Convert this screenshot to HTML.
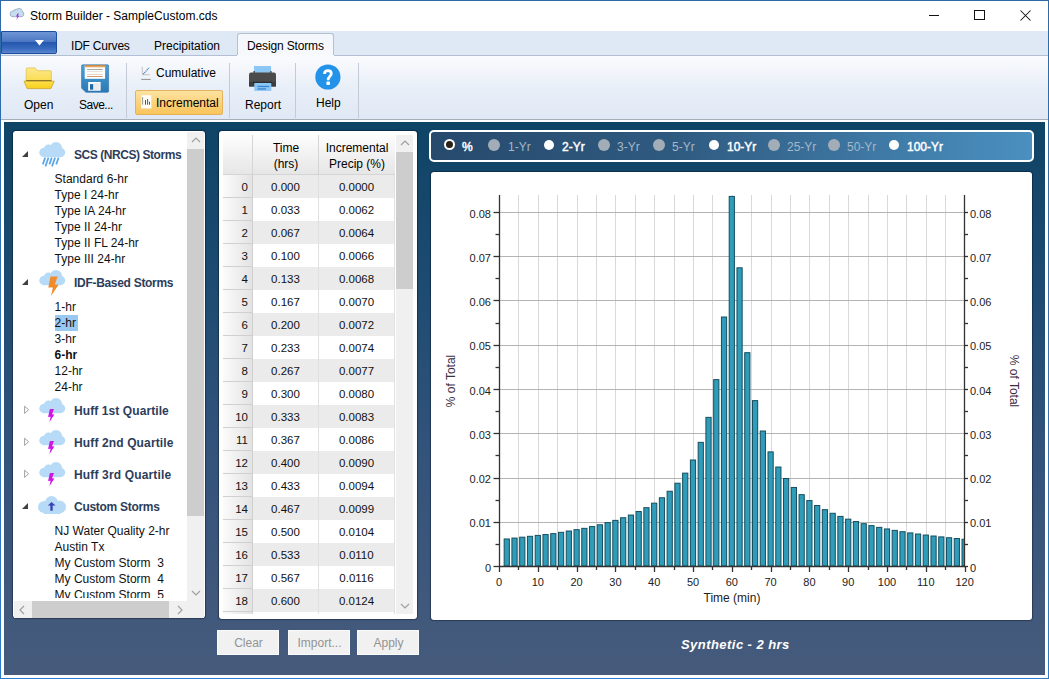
<!DOCTYPE html>
<html><head><meta charset="utf-8">
<style>
*{margin:0;padding:0;box-sizing:border-box}
html,body{width:1049px;height:679px;overflow:hidden;background:#fff;font-family:"Liberation Sans",sans-serif;font-size:12px;color:#000}
.a{position:absolute}
.t{position:absolute;white-space:nowrap;line-height:1}
#win{position:absolute;left:0;top:0;width:1049px;height:679px;border:1px solid transparent;border-image:linear-gradient(#2e6aa5,#2f72b4 50%,#2a7bcb) 1;}
#tabs{position:absolute;left:1px;top:31px;width:1047px;height:25px;background:#dfe8f5;border-bottom:1px solid #b3bfd3}
#ribbon{position:absolute;left:1px;top:56px;width:1047px;height:64px;background:linear-gradient(#fafbfd,#e9eff8 50%,#dfe8f5);border-bottom:1px solid #a9adb5}
#main{position:absolute;left:4px;top:122px;width:1041px;height:553px;background:linear-gradient(#0e4466 0%,#1e4b71 30%,#33537b 60%,#465b7c 100%)}
.panel{position:absolute;background:#fff;border-radius:3px;box-shadow:0 0 1px 1px rgba(0,0,20,.35)}
.sep{position:absolute;top:63px;width:1px;height:55px;background:#c5cbd6}
.rh{position:absolute;left:223px;width:30px;height:23px;background:linear-gradient(90deg,#fbfbfb,#e3e3e3);border-bottom:1px solid #d0d0d0;border-right:1px solid #cfcfcf;text-align:right;padding-right:4px;padding-top:1px;line-height:23px;font-size:11.5px;color:#111}
.rc{position:absolute;height:23px;text-align:center;padding-top:1px;line-height:23px;font-size:11.5px;color:#111;border-right:1px solid #e0e0e0}
.tree{position:absolute;white-space:nowrap;font-size:12px;line-height:16px;color:#111}
.th{position:absolute;white-space:nowrap;font-size:12px;font-weight:bold;color:#2d3d5a}
.btn{position:absolute;top:630px;height:25px;background:#f1f1f1;border:1px solid #fbfbfb;color:#939393;font-size:12px;text-align:center;line-height:25px;padding-left:1px}
.rl{position:absolute;top:139px;font-size:12px;font-weight:bold;white-space:nowrap;line-height:14px}
.rd{position:absolute;width:12px;height:12px;border-radius:50%;top:139px}
</style></head><body>
<div id="win"></div>
<!-- title bar -->
<svg class="a" style="left:9px;top:7px" width="16" height="14" viewBox="0 0 16 14">
 <g fill="#c6dcf0" stroke="#95a7bc" stroke-width="0.9"><circle cx="4" cy="6.8" r="2.9"/><circle cx="7.3" cy="5" r="2.8"/><circle cx="10.2" cy="4.6" r="3.1"/><circle cx="12.1" cy="7" r="2.7"/><rect x="4" y="6" width="8" height="3.7"/></g>
 <g fill="#c6dcf0"><circle cx="4" cy="6.8" r="2.45"/><circle cx="7.3" cy="5" r="2.35"/><circle cx="10.2" cy="4.6" r="2.65"/><circle cx="12.1" cy="7" r="2.25"/><rect x="4" y="5.5" width="8" height="3.75"/></g>
 <path d="M8.6 6.6 L7 9.6 L8.5 9.6 L7.2 13 L10.2 8.8 L8.8 8.8 L9.9 6.6Z" fill="#a326d8"/>
</svg>
<div class="t" style="left:30px;top:10px;font-size:12px">Storm Builder - SampleCustom.cds</div>
<div class="a" style="left:929px;top:15px;width:10px;height:1px;background:#111"></div>
<div class="a" style="left:974px;top:10px;width:11px;height:10px;border:1px solid #111"></div>
<svg class="a" style="left:1019.5px;top:10px" width="11" height="11"><path d="M0.5 0.5 L10.5 10.5 M10.5 0.5 L0.5 10.5" stroke="#111" stroke-width="1.05"/></svg>

<!-- tabs -->
<div id="tabs"></div>
<div class="a" style="left:1px;top:31px;width:56px;height:23px;border:1px solid #1d4f9c;border-radius:0 2px 2px 0;background:linear-gradient(#6e95d4,#4d78c4 45%,#2457ae 50%,#3a6cc0 80%,#5b86cf)"></div>
<svg class="a" style="left:35px;top:40px" width="10" height="6"><path d="M0 0 L9 0 L4.5 5.5Z" fill="#fff"/></svg>
<div class="t" style="left:71px;top:40px;letter-spacing:-0.2px">IDF Curves</div>
<div class="t" style="left:154px;top:40px">Precipitation</div>
<div class="a" style="left:237px;top:33px;width:97px;height:24px;background:linear-gradient(#f3f6fb,#f7f9fc);border:1px solid #b7c0cf;border-bottom:none;border-radius:3px 3px 0 0"></div>
<div class="t" style="left:247px;top:40px;letter-spacing:-0.15px">Design Storms</div>

<!-- ribbon -->
<div id="ribbon"></div>
<div class="a" style="left:237px;top:55px;width:97px;height:2px;background:#f8fafd"></div>
<!-- open folder -->
<svg class="a" style="left:23px;top:66px" width="33" height="24" viewBox="0 0 33 24">
 <defs><linearGradient id="fb" x1="0" y1="0" x2="0" y2="1"><stop offset="0" stop-color="#fde88a"/><stop offset="1" stop-color="#f9dc50"/></linearGradient>
 <linearGradient id="ff" x1="0" y1="0" x2="0" y2="1"><stop offset="0" stop-color="#fde04a"/><stop offset="1" stop-color="#f9cf1e"/></linearGradient></defs>
 <path d="M3.2 3.2 Q3.2 1.9 4.5 1.9 L12.3 1.9 L14.2 4.7 L27.3 4.7 Q28.4 4.7 28.4 5.8 L28.4 15 L3.2 15Z" fill="url(#fb)" stroke="#e0bd45" stroke-width="0.7"/>
 <rect x="3.2" y="14" width="25.2" height="1.5" fill="#7d6a2a"/>
 <path d="M1 15.2 L31.2 15.2 L27.9 22.6 L4.2 22.6 Z" fill="url(#ff)" stroke="#c9a227" stroke-width="0.8" stroke-linejoin="round"/>
</svg>
<div class="t" style="left:24px;top:99px">Open</div>
<!-- save floppy -->
<svg class="a" style="left:80px;top:64px" width="30" height="30" viewBox="0 0 30 30">
 <defs><linearGradient id="sb" x1="0" y1="0" x2="0" y2="1"><stop offset="0" stop-color="#4aa2d9"/><stop offset="1" stop-color="#2c78b4"/></linearGradient>
 <linearGradient id="so" x1="0" y1="0" x2="0" y2="1"><stop offset="0" stop-color="#c4782e"/><stop offset="1" stop-color="#f2c48a"/></linearGradient></defs>
 <path d="M1.6 1.8 Q1.6 0.8 2.6 0.8 L27.6 0.8 Q28.6 0.8 28.6 1.8 L28.6 27.3 Q28.6 28.3 27.6 28.3 L6 28.3 L1.6 24.3 Z" fill="url(#sb)" stroke="#2a6fa6" stroke-width="0.6"/>
 <rect x="4.7" y="1" width="20.4" height="13.8" fill="#fff"/>
 <rect x="4.7" y="1" width="20.4" height="2.5" fill="url(#so)"/>
 <rect x="7.1" y="5.1" width="15.7" height="0.9" fill="#a0a0a0"/>
 <rect x="7.1" y="7.1" width="15.7" height="0.8" fill="#dcdcdc"/>
 <rect x="7.1" y="9.9" width="15.7" height="0.8" fill="#e2c4ae"/>
 <rect x="7.1" y="12" width="15.7" height="0.9" fill="#c9906a"/>
 <rect x="8.2" y="18" width="12.4" height="8.7" fill="#fff"/>
 <rect x="13.5" y="19" width="6.2" height="7" fill="#ebebeb"/>
 <rect x="10" y="20.1" width="3.2" height="5.6" fill="#1f6aa8"/>
</svg>
<div class="t" style="left:79px;top:99px;letter-spacing:-0.5px">Save...</div>
<div class="sep" style="left:126px"></div>
<!-- cumulative -->
<svg class="a" style="left:140px;top:66px" width="12" height="15" viewBox="0 0 12 15">
 <path d="M2.3 0.9 L2.3 8.7 L9.8 8.7" stroke="#b8b8b8" stroke-width="0.8" fill="none"/>
 <path d="M3.3 8.2 L8.6 2.2" stroke="#2d6f9e" stroke-width="1.1" stroke-dasharray="1.1 0.7" fill="none"/>
 <path d="M8.6 2.2 L10 1.4" stroke="#9fd0ee" stroke-width="0.8" fill="none"/>
 <rect x="1.2" y="12.9" width="9.5" height="1.1" fill="#9a9a9a"/>
</svg>
<div class="t" style="left:156px;top:67px">Cumulative</div>
<div class="a" style="left:135px;top:90px;width:88px;height:25px;border:1px solid #e3b25b;border-radius:2px;background:linear-gradient(#fde3a0,#fbd27d 50%,#f9c45c)"></div>
<svg class="a" style="left:141px;top:94px" width="12" height="16" viewBox="0 0 12 16">
 <rect x="0" y="1" width="10.3" height="13.5" fill="#fffdf6" stroke="#f3e2bb" stroke-width="0.6"/>
 <rect x="1.2" y="3" width="0.9" height="7.7" fill="#8a8a8a"/>
 <rect x="4" y="6" width="1" height="4.7" fill="#2b6088"/><rect x="6.1" y="5" width="1" height="5.7" fill="#2b6088"/><rect x="8" y="7.7" width="1" height="3" fill="#2b6088"/>
</svg>
<div class="t" style="left:156px;top:97px">Incremental</div>
<div class="sep" style="left:229px"></div>
<!-- report printer -->
<svg class="a" style="left:248px;top:65px" width="29" height="27" viewBox="0 0 29 27">
 <rect x="6" y="1" width="17" height="7" fill="#8cc6f4"/>
 <rect x="5.5" y="6" width="1.2" height="2" fill="#333"/><rect x="22.3" y="6" width="1.2" height="2" fill="#333"/>
 <path d="M3 7.5 L26 7.5 Q28 7.5 28 9.5 L28 20.5 Q28 21.5 27 21.5 L2 21.5 Q1 21.5 1 20.5 L1 9.5 Q1 7.5 3 7.5Z" fill="#4b4b4b"/>
 <rect x="1" y="17" width="27" height="4.5" fill="#3d3d3d"/>
 <rect x="5" y="16.8" width="19" height="1.4" fill="#1e1e1e"/>
 <rect x="6.3" y="17.9" width="17" height="8" fill="#8cc6f4"/>
 <rect x="9.5" y="20.8" width="11.5" height="1.3" fill="#3a84d0"/>
 <rect x="9.5" y="23.3" width="8.5" height="1.3" fill="#3a84d0"/>
</svg>
<div class="t" style="left:245px;top:99px">Report</div>
<div class="sep" style="left:295px"></div>
<!-- help -->
<svg class="a" style="left:315px;top:64px" width="26" height="26" viewBox="0 0 26 26">
 <circle cx="12.9" cy="13" r="12.6" fill="#2393ea"/>
 <path d="M9.5 10 C9.5 7.3 11.2 6.7 13 6.7 C15.2 6.7 16.3 8 16.3 9.6 C16.3 12.3 13.2 12.6 13.2 15.6 L13.2 16.2" stroke="#fff" stroke-width="2.7" fill="none"/>
 <rect x="11.4" y="17.6" width="3.6" height="3.3" rx="1" fill="#fff"/>
</svg>
<div class="t" style="left:316px;top:97px">Help</div>
<div class="sep" style="left:358px"></div>

<!-- main -->
<div id="main"></div>

<!-- tree panel -->
<div class="panel" style="left:13px;top:131px;width:192px;height:487px;overflow:hidden">
</div>
<div class="a" style="left:187px;top:132px;width:17px;height:469px;background:#f0f0f0"></div>
<div class="a" style="left:187px;top:149px;width:17px;height:367px;background:#cdcdcd"></div>
<svg class="a" style="left:191px;top:137px" width="10" height="6"><path d="M1 5 L5 1 L9 5" stroke="#a0a0a0" stroke-width="1.2" fill="none"/></svg>
<svg class="a" style="left:191px;top:590px" width="10" height="6"><path d="M1 1 L5 5 L9 1" stroke="#a0a0a0" stroke-width="1.2" fill="none"/></svg>
<div class="a" style="left:14px;top:601px;width:190px;height:17px;background:#f0f0f0"></div>
<div class="a" style="left:32px;top:601px;width:137px;height:17px;background:#cdcdcd"></div>
<svg class="a" style="left:19px;top:605px" width="6" height="10"><path d="M5 1 L1 5 L5 9" stroke="#a0a0a0" stroke-width="1.2" fill="none"/></svg>
<svg class="a" style="left:177px;top:605px" width="6" height="10"><path d="M1 1 L5 5 L1 9" stroke="#a0a0a0" stroke-width="1.2" fill="none"/></svg>

<div class="a" style="left:13px;top:131px;width:174px;height:467px;overflow:hidden"><div style="position:absolute;left:-13px;top:-131px;width:1049px;height:679px"><svg class="a" style="left:21px;top:150px" width="8" height="8"><path d="M7 1 L7 7 L1 7Z" fill="#404040"/></svg>
<svg class="a" style="left:36px;top:138px" width="34" height="32" viewBox="0 0 34 32"><circle cx="8" cy="14.5" r="4.7" fill="#b7daf6"/><circle cx="12.5" cy="11" r="4.6" fill="#b7daf6"/><circle cx="20" cy="10" r="6" fill="#b7daf6"/><circle cx="24.5" cy="14.5" r="4.7" fill="#b7daf6"/><rect x="8" y="11" width="16.5" height="8.2" fill="#b7daf6"/><path d="M9.2 19.6 L6.8 26.4 M12.5 19.6 L9.4 28.4 M15.8 19.6 L13.4 26.4 M19.1 19.6 L16 28.4 M22.6 19.6 L20.2 26.4" stroke="#5ba6e8" stroke-width="1.7" stroke-linecap="butt"/></svg>
<div class="th" style="left:74px;top:148px;letter-spacing:-0.44px">SCS (NRCS) Storms</div>
<div class="tree" style="left:54.6px;top:171px;">Standard 6-hr</div>
<div class="tree" style="left:54.6px;top:187px;">Type I 24-hr</div>
<div class="tree" style="left:54.6px;top:203px;">Type IA 24-hr</div>
<div class="tree" style="left:54.6px;top:219px;">Type II 24-hr</div>
<div class="tree" style="left:54.6px;top:235px;">Type II FL 24-hr</div>
<div class="tree" style="left:54.6px;top:251px;">Type III 24-hr</div>
<svg class="a" style="left:21px;top:278px" width="8" height="8"><path d="M7 1 L7 7 L1 7Z" fill="#404040"/></svg>
<svg class="a" style="left:36px;top:266px" width="34" height="32" viewBox="0 0 34 32"><circle cx="8" cy="14.5" r="4.7" fill="#b7daf6"/><circle cx="12.5" cy="11" r="4.6" fill="#b7daf6"/><circle cx="20" cy="10" r="6" fill="#b7daf6"/><circle cx="24.5" cy="14.5" r="4.7" fill="#b7daf6"/><rect x="8" y="11" width="16.5" height="8.2" fill="#b7daf6"/><path d="M14.5 10.6 L21.6 10.6 L18.8 18.6 L22.6 18.8 L15 30 L16.9 21.6 L12.3 21.6 Z" fill="#f08c2c"/></svg>
<div class="th" style="left:74px;top:276px;letter-spacing:-0.3px">IDF-Based Storms</div>
<div class="tree" style="left:54.6px;top:299px;">1-hr</div>
<div class="tree" style="left:54.6px;top:315px;background:#99c9f1;padding-right:2px">2-hr</div>
<div class="tree" style="left:54.6px;top:331px;">3-hr</div>
<div class="tree" style="left:54.6px;top:347px;font-weight:bold">6-hr</div>
<div class="tree" style="left:54.6px;top:363px;">12-hr</div>
<div class="tree" style="left:54.6px;top:379px;">24-hr</div>
<svg class="a" style="left:24px;top:405px" width="6" height="10"><path d="M0.6 1.2 L4.6 4.8 L0.6 8.4Z" fill="#fff" stroke="#a0a0a0" stroke-width="1"/></svg>
<svg class="a" style="left:36px;top:394px" width="34" height="32" viewBox="0 0 34 32"><circle cx="8" cy="14.5" r="4.7" fill="#b7daf6"/><circle cx="12.5" cy="11" r="4.6" fill="#b7daf6"/><circle cx="20" cy="10" r="6" fill="#b7daf6"/><circle cx="24.5" cy="14.5" r="4.7" fill="#b7daf6"/><rect x="8" y="11" width="16.5" height="8.2" fill="#b7daf6"/><path d="M13.9 15 L17.9 15 L16.1 20.2 L18.3 20.6 L13.4 28.2 L14.6 22.7 L12.1 22.9 Z" fill="#cf16e6"/></svg>
<div class="th" style="left:74px;top:404px;letter-spacing:0.09px">Huff 1st Quartile</div>
<svg class="a" style="left:24px;top:437px" width="6" height="10"><path d="M0.6 1.2 L4.6 4.8 L0.6 8.4Z" fill="#fff" stroke="#a0a0a0" stroke-width="1"/></svg>
<svg class="a" style="left:36px;top:426px" width="34" height="32" viewBox="0 0 34 32"><circle cx="8" cy="14.5" r="4.7" fill="#b7daf6"/><circle cx="12.5" cy="11" r="4.6" fill="#b7daf6"/><circle cx="20" cy="10" r="6" fill="#b7daf6"/><circle cx="24.5" cy="14.5" r="4.7" fill="#b7daf6"/><rect x="8" y="11" width="16.5" height="8.2" fill="#b7daf6"/><path d="M13.9 15 L17.9 15 L16.1 20.2 L18.3 20.6 L13.4 28.2 L14.6 22.7 L12.1 22.9 Z" fill="#cf16e6"/></svg>
<div class="th" style="left:74px;top:436px;letter-spacing:0.13px">Huff 2nd Quartile</div>
<svg class="a" style="left:24px;top:469px" width="6" height="10"><path d="M0.6 1.2 L4.6 4.8 L0.6 8.4Z" fill="#fff" stroke="#a0a0a0" stroke-width="1"/></svg>
<svg class="a" style="left:36px;top:458px" width="34" height="32" viewBox="0 0 34 32"><circle cx="8" cy="14.5" r="4.7" fill="#b7daf6"/><circle cx="12.5" cy="11" r="4.6" fill="#b7daf6"/><circle cx="20" cy="10" r="6" fill="#b7daf6"/><circle cx="24.5" cy="14.5" r="4.7" fill="#b7daf6"/><rect x="8" y="11" width="16.5" height="8.2" fill="#b7daf6"/><path d="M13.9 15 L17.9 15 L16.1 20.2 L18.3 20.6 L13.4 28.2 L14.6 22.7 L12.1 22.9 Z" fill="#cf16e6"/></svg>
<div class="th" style="left:74px;top:468px;letter-spacing:0.15px">Huff 3rd Quartile</div>
<svg class="a" style="left:21px;top:502px" width="8" height="8"><path d="M7 1 L7 7 L1 7Z" fill="#404040"/></svg>
<svg class="a" style="left:36px;top:490px" width="34" height="32" viewBox="0 0 34 32"><circle cx="8" cy="17" r="6" fill="#b7daf6"/><circle cx="15.5" cy="12.5" r="6.5" fill="#b7daf6"/><circle cx="23.5" cy="17" r="6.5" fill="#b7daf6"/><rect x="8" y="15" width="16" height="9" fill="#b7daf6"/><path d="M15.5 12 L11.8 15.6 L14.3 15.6 L14.3 20.8 L16.7 20.8 L16.7 15.6 L19.6 15.6 Z" fill="#3b45b8"/></svg>
<div class="th" style="left:74px;top:500px;letter-spacing:-0.29px">Custom Storms</div>
<div class="tree" style="left:54.6px;top:523px;">NJ Water Quality 2-hr</div>
<div class="tree" style="left:54.6px;top:539px;">Austin Tx</div>
<div class="tree" style="left:54.6px;top:555px;">My Custom Storm&nbsp; 3</div>
<div class="tree" style="left:54.6px;top:571px;">My Custom Storm&nbsp; 4</div>
<div class="tree" style="left:54.6px;top:587px;">My Custom Storm&nbsp; 5</div></div></div>

<!-- table panel -->
<div class="panel" style="left:219px;top:131px;width:198px;height:488px"></div>
<div class="a" style="left:223px;top:135px;width:172px;height:40px;background:linear-gradient(#fdfdfd,#e6e6e6);border-bottom:1px solid #d5d5d5"></div>
<div class="a" style="left:252px;top:135px;width:1px;height:39px;background:#d5d5d5"></div>
<div class="a" style="left:318px;top:135px;width:1px;height:39px;background:#d5d5d5"></div>
<div class="t" style="left:253px;width:66px;text-align:center;top:140px;line-height:16px;white-space:normal">Time<br>(hrs)</div>
<div class="t" style="left:319px;width:76px;text-align:center;top:140px;line-height:16px;white-space:normal">Incremental<br>Precip (%)</div>
<div class="a" style="left:219px;top:175px;width:198px;height:439px;overflow:hidden">
<div style="position:absolute;left:-219px;top:-175px;width:1049px;height:679px">
<div class="rh" style="top:175px">0</div><div class="rc" style="top:175px;left:253px;width:66px;background:#ebebeb">0.000</div><div class="rc" style="top:175px;left:319px;width:76px;background:#ebebeb">0.0000</div>
<div class="rh" style="top:198px">1</div><div class="rc" style="top:198px;left:253px;width:66px;background:#ffffff">0.033</div><div class="rc" style="top:198px;left:319px;width:76px;background:#ffffff">0.0062</div>
<div class="rh" style="top:221px">2</div><div class="rc" style="top:221px;left:253px;width:66px;background:#ebebeb">0.067</div><div class="rc" style="top:221px;left:319px;width:76px;background:#ebebeb">0.0064</div>
<div class="rh" style="top:244px">3</div><div class="rc" style="top:244px;left:253px;width:66px;background:#ffffff">0.100</div><div class="rc" style="top:244px;left:319px;width:76px;background:#ffffff">0.0066</div>
<div class="rh" style="top:267px">4</div><div class="rc" style="top:267px;left:253px;width:66px;background:#ebebeb">0.133</div><div class="rc" style="top:267px;left:319px;width:76px;background:#ebebeb">0.0068</div>
<div class="rh" style="top:290px">5</div><div class="rc" style="top:290px;left:253px;width:66px;background:#ffffff">0.167</div><div class="rc" style="top:290px;left:319px;width:76px;background:#ffffff">0.0070</div>
<div class="rh" style="top:313px">6</div><div class="rc" style="top:313px;left:253px;width:66px;background:#ebebeb">0.200</div><div class="rc" style="top:313px;left:319px;width:76px;background:#ebebeb">0.0072</div>
<div class="rh" style="top:336px">7</div><div class="rc" style="top:336px;left:253px;width:66px;background:#ffffff">0.233</div><div class="rc" style="top:336px;left:319px;width:76px;background:#ffffff">0.0074</div>
<div class="rh" style="top:359px">8</div><div class="rc" style="top:359px;left:253px;width:66px;background:#ebebeb">0.267</div><div class="rc" style="top:359px;left:319px;width:76px;background:#ebebeb">0.0077</div>
<div class="rh" style="top:382px">9</div><div class="rc" style="top:382px;left:253px;width:66px;background:#ffffff">0.300</div><div class="rc" style="top:382px;left:319px;width:76px;background:#ffffff">0.0080</div>
<div class="rh" style="top:405px">10</div><div class="rc" style="top:405px;left:253px;width:66px;background:#ebebeb">0.333</div><div class="rc" style="top:405px;left:319px;width:76px;background:#ebebeb">0.0083</div>
<div class="rh" style="top:428px">11</div><div class="rc" style="top:428px;left:253px;width:66px;background:#ffffff">0.367</div><div class="rc" style="top:428px;left:319px;width:76px;background:#ffffff">0.0086</div>
<div class="rh" style="top:451px">12</div><div class="rc" style="top:451px;left:253px;width:66px;background:#ebebeb">0.400</div><div class="rc" style="top:451px;left:319px;width:76px;background:#ebebeb">0.0090</div>
<div class="rh" style="top:474px">13</div><div class="rc" style="top:474px;left:253px;width:66px;background:#ffffff">0.433</div><div class="rc" style="top:474px;left:319px;width:76px;background:#ffffff">0.0094</div>
<div class="rh" style="top:497px">14</div><div class="rc" style="top:497px;left:253px;width:66px;background:#ebebeb">0.467</div><div class="rc" style="top:497px;left:319px;width:76px;background:#ebebeb">0.0099</div>
<div class="rh" style="top:520px">15</div><div class="rc" style="top:520px;left:253px;width:66px;background:#ffffff">0.500</div><div class="rc" style="top:520px;left:319px;width:76px;background:#ffffff">0.0104</div>
<div class="rh" style="top:543px">16</div><div class="rc" style="top:543px;left:253px;width:66px;background:#ebebeb">0.533</div><div class="rc" style="top:543px;left:319px;width:76px;background:#ebebeb">0.0110</div>
<div class="rh" style="top:566px">17</div><div class="rc" style="top:566px;left:253px;width:66px;background:#ffffff">0.567</div><div class="rc" style="top:566px;left:319px;width:76px;background:#ffffff">0.0116</div>
<div class="rh" style="top:589px">18</div><div class="rc" style="top:589px;left:253px;width:66px;background:#ebebeb">0.600</div><div class="rc" style="top:589px;left:319px;width:76px;background:#ebebeb">0.0124</div>
<div class="rh" style="top:612px">19</div><div class="rc" style="top:612px;left:253px;width:66px;background:#ffffff">0.633</div><div class="rc" style="top:612px;left:319px;width:76px;background:#ffffff">0.0132</div>
</div></div>
<div class="a" style="left:396px;top:135px;width:17px;height:479px;background:#f0f0f0"></div>
<div class="a" style="left:396px;top:152px;width:17px;height:137px;background:#cdcdcd"></div>
<svg class="a" style="left:400px;top:140px" width="10" height="6"><path d="M1 5 L5 1 L9 5" stroke="#a0a0a0" stroke-width="1.2" fill="none"/></svg>
<svg class="a" style="left:400px;top:603px" width="10" height="6"><path d="M1 1 L5 5 L9 1" stroke="#a0a0a0" stroke-width="1.2" fill="none"/></svg>

<div class="btn" style="left:217px;width:62px">Clear</div>
<div class="btn" style="left:288px;width:62px">Import...</div>
<div class="btn" style="left:357px;width:62px">Apply</div>

<!-- radio bar -->
<div class="a" style="left:429px;top:130px;width:605px;height:32px;border:2px solid #fff;border-radius:5px;background:linear-gradient(90deg,#274a6d,#2f5a80 40%,#4a90c0)"></div>
<div class="rd" style="left:443.5px;top:139.4px;width:11px;height:11px;background:#2a2118;border:2.2px solid #fff"></div>
<div class="rl" style="left:462px;color:#fff;font-weight:normal;-webkit-text-stroke:0.45px #fff;top:140px">%</div>
<div class="rd" style="left:488px;top:139.2px;width:12px;height:12px;background:#a2adb8"></div>
<div class="rl" style="left:508px;color:#a6b8c8;font-weight:normal;top:140px">1-Yr</div>
<div class="rd" style="left:544px;top:140px;width:10px;height:10px;background:#fff"></div>
<div class="rl" style="left:562px;color:#fff;font-weight:normal;-webkit-text-stroke:0.45px #fff;top:140px">2-Yr</div>
<div class="rd" style="left:598px;top:139.2px;width:12px;height:12px;background:#a2adb8"></div>
<div class="rl" style="left:617px;color:#a6b8c8;font-weight:normal;top:140px">3-Yr</div>
<div class="rd" style="left:653px;top:139.2px;width:12px;height:12px;background:#a2adb8"></div>
<div class="rl" style="left:672px;color:#a6b8c8;font-weight:normal;top:140px">5-Yr</div>
<div class="rd" style="left:709px;top:140px;width:10px;height:10px;background:#fff"></div>
<div class="rl" style="left:727px;color:#fff;font-weight:normal;-webkit-text-stroke:0.45px #fff;top:140px">10-Yr</div>
<div class="rd" style="left:768px;top:139.2px;width:12px;height:12px;background:#a2adb8"></div>
<div class="rl" style="left:787px;color:#a6b8c8;font-weight:normal;top:140px">25-Yr</div>
<div class="rd" style="left:828px;top:139.2px;width:12px;height:12px;background:#a2adb8"></div>
<div class="rl" style="left:847px;color:#a6b8c8;font-weight:normal;top:140px">50-Yr</div>
<div class="rd" style="left:889px;top:140px;width:10px;height:10px;background:#fff"></div>
<div class="rl" style="left:907px;color:#fff;font-weight:normal;-webkit-text-stroke:0.45px #fff;top:140px">100-Yr</div>

<!-- chart panel -->
<div class="panel" style="left:431px;top:172px;width:601px;height:448px"></div>
<svg width="1049" height="679" style="position:absolute;left:0;top:0">
<defs><clipPath id="pc"><rect x="499" y="195" width="466" height="372"/></clipPath></defs>
<line x1="518.5" y1="195" x2="518.5" y2="566" stroke="#d9d9d9" stroke-width="1"/>
<line x1="538.5" y1="195" x2="538.5" y2="566" stroke="#d9d9d9" stroke-width="1"/>
<line x1="557.5" y1="195" x2="557.5" y2="566" stroke="#d9d9d9" stroke-width="1"/>
<line x1="577.5" y1="195" x2="577.5" y2="566" stroke="#d9d9d9" stroke-width="1"/>
<line x1="596.5" y1="195" x2="596.5" y2="566" stroke="#d9d9d9" stroke-width="1"/>
<line x1="615.5" y1="195" x2="615.5" y2="566" stroke="#d9d9d9" stroke-width="1"/>
<line x1="635.5" y1="195" x2="635.5" y2="566" stroke="#d9d9d9" stroke-width="1"/>
<line x1="654.5" y1="195" x2="654.5" y2="566" stroke="#d9d9d9" stroke-width="1"/>
<line x1="674.5" y1="195" x2="674.5" y2="566" stroke="#d9d9d9" stroke-width="1"/>
<line x1="693.5" y1="195" x2="693.5" y2="566" stroke="#d9d9d9" stroke-width="1"/>
<line x1="712.5" y1="195" x2="712.5" y2="566" stroke="#d9d9d9" stroke-width="1"/>
<line x1="732.5" y1="195" x2="732.5" y2="566" stroke="#d9d9d9" stroke-width="1"/>
<line x1="751.5" y1="195" x2="751.5" y2="566" stroke="#d9d9d9" stroke-width="1"/>
<line x1="771.5" y1="195" x2="771.5" y2="566" stroke="#d9d9d9" stroke-width="1"/>
<line x1="790.5" y1="195" x2="790.5" y2="566" stroke="#d9d9d9" stroke-width="1"/>
<line x1="809.5" y1="195" x2="809.5" y2="566" stroke="#d9d9d9" stroke-width="1"/>
<line x1="829.5" y1="195" x2="829.5" y2="566" stroke="#d9d9d9" stroke-width="1"/>
<line x1="848.5" y1="195" x2="848.5" y2="566" stroke="#d9d9d9" stroke-width="1"/>
<line x1="868.5" y1="195" x2="868.5" y2="566" stroke="#d9d9d9" stroke-width="1"/>
<line x1="887.5" y1="195" x2="887.5" y2="566" stroke="#d9d9d9" stroke-width="1"/>
<line x1="906.5" y1="195" x2="906.5" y2="566" stroke="#d9d9d9" stroke-width="1"/>
<line x1="926.5" y1="195" x2="926.5" y2="566" stroke="#d9d9d9" stroke-width="1"/>
<line x1="945.5" y1="195" x2="945.5" y2="566" stroke="#d9d9d9" stroke-width="1"/>
<line x1="499" y1="522.5" x2="965" y2="522.5" stroke="#b4b4b4" stroke-width="1"/>
<line x1="499" y1="478.5" x2="965" y2="478.5" stroke="#b4b4b4" stroke-width="1"/>
<line x1="499" y1="433.5" x2="965" y2="433.5" stroke="#b4b4b4" stroke-width="1"/>
<line x1="499" y1="389.5" x2="965" y2="389.5" stroke="#b4b4b4" stroke-width="1"/>
<line x1="499" y1="345.5" x2="965" y2="345.5" stroke="#b4b4b4" stroke-width="1"/>
<line x1="499" y1="300.5" x2="965" y2="300.5" stroke="#b4b4b4" stroke-width="1"/>
<line x1="499" y1="256.5" x2="965" y2="256.5" stroke="#b4b4b4" stroke-width="1"/>
<line x1="499" y1="212.5" x2="965" y2="212.5" stroke="#b4b4b4" stroke-width="1"/>
<g clip-path="url(#pc)"><rect x="504.16" y="538.97" width="5.2" height="27.03" fill="#2f9db9" stroke="#164e5e" stroke-width="1"/><rect x="511.92" y="538.08" width="5.2" height="27.92" fill="#2f9db9" stroke="#164e5e" stroke-width="1"/><rect x="519.68" y="537.19" width="5.2" height="28.81" fill="#2f9db9" stroke="#164e5e" stroke-width="1"/><rect x="527.44" y="536.31" width="5.2" height="29.69" fill="#2f9db9" stroke="#164e5e" stroke-width="1"/><rect x="535.20" y="535.42" width="5.2" height="30.58" fill="#2f9db9" stroke="#164e5e" stroke-width="1"/><rect x="542.96" y="534.54" width="5.2" height="31.46" fill="#2f9db9" stroke="#164e5e" stroke-width="1"/><rect x="550.72" y="533.65" width="5.2" height="32.35" fill="#2f9db9" stroke="#164e5e" stroke-width="1"/><rect x="558.48" y="532.33" width="5.2" height="33.67" fill="#2f9db9" stroke="#164e5e" stroke-width="1"/><rect x="566.24" y="531.00" width="5.2" height="35.00" fill="#2f9db9" stroke="#164e5e" stroke-width="1"/><rect x="574.00" y="529.67" width="5.2" height="36.33" fill="#2f9db9" stroke="#164e5e" stroke-width="1"/><rect x="581.76" y="528.35" width="5.2" height="37.65" fill="#2f9db9" stroke="#164e5e" stroke-width="1"/><rect x="589.52" y="526.57" width="5.2" height="39.43" fill="#2f9db9" stroke="#164e5e" stroke-width="1"/><rect x="597.28" y="524.80" width="5.2" height="41.20" fill="#2f9db9" stroke="#164e5e" stroke-width="1"/><rect x="605.04" y="522.59" width="5.2" height="43.41" fill="#2f9db9" stroke="#164e5e" stroke-width="1"/><rect x="612.80" y="520.38" width="5.2" height="45.62" fill="#2f9db9" stroke="#164e5e" stroke-width="1"/><rect x="620.56" y="517.73" width="5.2" height="48.27" fill="#2f9db9" stroke="#164e5e" stroke-width="1"/><rect x="628.32" y="515.07" width="5.2" height="50.93" fill="#2f9db9" stroke="#164e5e" stroke-width="1"/><rect x="636.08" y="511.53" width="5.2" height="54.47" fill="#2f9db9" stroke="#164e5e" stroke-width="1"/><rect x="643.84" y="507.68" width="5.2" height="58.32" fill="#2f9db9" stroke="#164e5e" stroke-width="1"/><rect x="651.60" y="503.15" width="5.2" height="62.85" fill="#2f9db9" stroke="#164e5e" stroke-width="1"/><rect x="659.36" y="497.76" width="5.2" height="68.24" fill="#2f9db9" stroke="#164e5e" stroke-width="1"/><rect x="667.12" y="491.25" width="5.2" height="74.75" fill="#2f9db9" stroke="#164e5e" stroke-width="1"/><rect x="674.88" y="483.23" width="5.2" height="82.77" fill="#2f9db9" stroke="#164e5e" stroke-width="1"/><rect x="682.64" y="473.13" width="5.2" height="92.87" fill="#2f9db9" stroke="#164e5e" stroke-width="1"/><rect x="690.40" y="460.01" width="5.2" height="105.99" fill="#2f9db9" stroke="#164e5e" stroke-width="1"/><rect x="698.16" y="442.34" width="5.2" height="123.66" fill="#2f9db9" stroke="#164e5e" stroke-width="1"/><rect x="705.92" y="417.36" width="5.2" height="148.64" fill="#2f9db9" stroke="#164e5e" stroke-width="1"/><rect x="713.68" y="379.63" width="5.2" height="186.37" fill="#2f9db9" stroke="#164e5e" stroke-width="1"/><rect x="721.44" y="317.00" width="5.2" height="249.00" fill="#2f9db9" stroke="#164e5e" stroke-width="1"/><rect x="729.20" y="196.41" width="5.2" height="369.59" fill="#2f9db9" stroke="#164e5e" stroke-width="1"/><rect x="736.96" y="267.81" width="5.2" height="298.19" fill="#2f9db9" stroke="#164e5e" stroke-width="1"/><rect x="744.72" y="352.69" width="5.2" height="213.31" fill="#2f9db9" stroke="#164e5e" stroke-width="1"/><rect x="752.48" y="400.61" width="5.2" height="165.39" fill="#2f9db9" stroke="#164e5e" stroke-width="1"/><rect x="760.24" y="431.01" width="5.2" height="134.99" fill="#2f9db9" stroke="#164e5e" stroke-width="1"/><rect x="768.00" y="451.88" width="5.2" height="114.12" fill="#2f9db9" stroke="#164e5e" stroke-width="1"/><rect x="775.76" y="467.02" width="5.2" height="98.98" fill="#2f9db9" stroke="#164e5e" stroke-width="1"/><rect x="783.52" y="478.49" width="5.2" height="87.51" fill="#2f9db9" stroke="#164e5e" stroke-width="1"/><rect x="791.28" y="487.46" width="5.2" height="78.54" fill="#2f9db9" stroke="#164e5e" stroke-width="1"/><rect x="799.04" y="494.66" width="5.2" height="71.34" fill="#2f9db9" stroke="#164e5e" stroke-width="1"/><rect x="806.80" y="500.57" width="5.2" height="65.43" fill="#2f9db9" stroke="#164e5e" stroke-width="1"/><rect x="814.56" y="505.51" width="5.2" height="60.49" fill="#2f9db9" stroke="#164e5e" stroke-width="1"/><rect x="822.32" y="509.69" width="5.2" height="56.31" fill="#2f9db9" stroke="#164e5e" stroke-width="1"/><rect x="830.08" y="513.29" width="5.2" height="52.71" fill="#2f9db9" stroke="#164e5e" stroke-width="1"/><rect x="837.84" y="516.40" width="5.2" height="49.60" fill="#2f9db9" stroke="#164e5e" stroke-width="1"/><rect x="845.60" y="519.14" width="5.2" height="46.86" fill="#2f9db9" stroke="#164e5e" stroke-width="1"/><rect x="853.36" y="521.55" width="5.2" height="44.45" fill="#2f9db9" stroke="#164e5e" stroke-width="1"/><rect x="861.12" y="523.70" width="5.2" height="42.30" fill="#2f9db9" stroke="#164e5e" stroke-width="1"/><rect x="868.88" y="525.63" width="5.2" height="40.37" fill="#2f9db9" stroke="#164e5e" stroke-width="1"/><rect x="876.64" y="527.37" width="5.2" height="38.63" fill="#2f9db9" stroke="#164e5e" stroke-width="1"/><rect x="884.40" y="528.95" width="5.2" height="37.05" fill="#2f9db9" stroke="#164e5e" stroke-width="1"/><rect x="892.16" y="530.38" width="5.2" height="35.62" fill="#2f9db9" stroke="#164e5e" stroke-width="1"/><rect x="899.92" y="531.70" width="5.2" height="34.30" fill="#2f9db9" stroke="#164e5e" stroke-width="1"/><rect x="907.68" y="532.91" width="5.2" height="33.09" fill="#2f9db9" stroke="#164e5e" stroke-width="1"/><rect x="915.44" y="534.02" width="5.2" height="31.98" fill="#2f9db9" stroke="#164e5e" stroke-width="1"/><rect x="923.20" y="535.05" width="5.2" height="30.95" fill="#2f9db9" stroke="#164e5e" stroke-width="1"/><rect x="930.96" y="536.01" width="5.2" height="29.99" fill="#2f9db9" stroke="#164e5e" stroke-width="1"/><rect x="938.72" y="536.90" width="5.2" height="29.10" fill="#2f9db9" stroke="#164e5e" stroke-width="1"/><rect x="946.48" y="537.73" width="5.2" height="28.27" fill="#2f9db9" stroke="#164e5e" stroke-width="1"/><rect x="954.24" y="538.51" width="5.2" height="27.49" fill="#2f9db9" stroke="#164e5e" stroke-width="1"/><rect x="962.00" y="539.24" width="5.2" height="26.76" fill="#2f9db9" stroke="#164e5e" stroke-width="1"/></g>
<line x1="499.5" y1="195" x2="499.5" y2="567" stroke="#333" stroke-width="1.3"/>
<line x1="964.5" y1="195" x2="964.5" y2="567" stroke="#333" stroke-width="1.3"/>
<line x1="499" y1="566.5" x2="965" y2="566.5" stroke="#333" stroke-width="1.3"/>
<line x1="493.5" y1="566.5" x2="499.5" y2="566.5" stroke="#333" stroke-width="1.3"/>
<line x1="964.5" y1="566.5" x2="968" y2="566.5" stroke="#333" stroke-width="1.3"/>
<line x1="495.5" y1="544.5" x2="499.5" y2="544.5" stroke="#333" stroke-width="1.3"/>
<line x1="964.5" y1="544.5" x2="968" y2="544.5" stroke="#333" stroke-width="1.3"/>
<line x1="493.5" y1="522.5" x2="499.5" y2="522.5" stroke="#333" stroke-width="1.3"/>
<line x1="964.5" y1="522.5" x2="968" y2="522.5" stroke="#333" stroke-width="1.3"/>
<line x1="495.5" y1="500.5" x2="499.5" y2="500.5" stroke="#333" stroke-width="1.3"/>
<line x1="964.5" y1="500.5" x2="968" y2="500.5" stroke="#333" stroke-width="1.3"/>
<line x1="493.5" y1="478.5" x2="499.5" y2="478.5" stroke="#333" stroke-width="1.3"/>
<line x1="964.5" y1="478.5" x2="968" y2="478.5" stroke="#333" stroke-width="1.3"/>
<line x1="495.5" y1="455.5" x2="499.5" y2="455.5" stroke="#333" stroke-width="1.3"/>
<line x1="964.5" y1="455.5" x2="968" y2="455.5" stroke="#333" stroke-width="1.3"/>
<line x1="493.5" y1="433.5" x2="499.5" y2="433.5" stroke="#333" stroke-width="1.3"/>
<line x1="964.5" y1="433.5" x2="968" y2="433.5" stroke="#333" stroke-width="1.3"/>
<line x1="495.5" y1="411.5" x2="499.5" y2="411.5" stroke="#333" stroke-width="1.3"/>
<line x1="964.5" y1="411.5" x2="968" y2="411.5" stroke="#333" stroke-width="1.3"/>
<line x1="493.5" y1="389.5" x2="499.5" y2="389.5" stroke="#333" stroke-width="1.3"/>
<line x1="964.5" y1="389.5" x2="968" y2="389.5" stroke="#333" stroke-width="1.3"/>
<line x1="495.5" y1="367.5" x2="499.5" y2="367.5" stroke="#333" stroke-width="1.3"/>
<line x1="964.5" y1="367.5" x2="968" y2="367.5" stroke="#333" stroke-width="1.3"/>
<line x1="493.5" y1="345.5" x2="499.5" y2="345.5" stroke="#333" stroke-width="1.3"/>
<line x1="964.5" y1="345.5" x2="968" y2="345.5" stroke="#333" stroke-width="1.3"/>
<line x1="495.5" y1="323.5" x2="499.5" y2="323.5" stroke="#333" stroke-width="1.3"/>
<line x1="964.5" y1="323.5" x2="968" y2="323.5" stroke="#333" stroke-width="1.3"/>
<line x1="493.5" y1="300.5" x2="499.5" y2="300.5" stroke="#333" stroke-width="1.3"/>
<line x1="964.5" y1="300.5" x2="968" y2="300.5" stroke="#333" stroke-width="1.3"/>
<line x1="495.5" y1="278.5" x2="499.5" y2="278.5" stroke="#333" stroke-width="1.3"/>
<line x1="964.5" y1="278.5" x2="968" y2="278.5" stroke="#333" stroke-width="1.3"/>
<line x1="493.5" y1="256.5" x2="499.5" y2="256.5" stroke="#333" stroke-width="1.3"/>
<line x1="964.5" y1="256.5" x2="968" y2="256.5" stroke="#333" stroke-width="1.3"/>
<line x1="495.5" y1="234.5" x2="499.5" y2="234.5" stroke="#333" stroke-width="1.3"/>
<line x1="964.5" y1="234.5" x2="968" y2="234.5" stroke="#333" stroke-width="1.3"/>
<line x1="493.5" y1="212.5" x2="499.5" y2="212.5" stroke="#333" stroke-width="1.3"/>
<line x1="964.5" y1="212.5" x2="968" y2="212.5" stroke="#333" stroke-width="1.3"/>
<line x1="499.5" y1="566" x2="499.5" y2="572" stroke="#333" stroke-width="1.3"/>
<line x1="518.5" y1="566" x2="518.5" y2="570" stroke="#333" stroke-width="1.3"/>
<line x1="538.5" y1="566" x2="538.5" y2="572" stroke="#333" stroke-width="1.3"/>
<line x1="557.5" y1="566" x2="557.5" y2="570" stroke="#333" stroke-width="1.3"/>
<line x1="577.5" y1="566" x2="577.5" y2="572" stroke="#333" stroke-width="1.3"/>
<line x1="596.5" y1="566" x2="596.5" y2="570" stroke="#333" stroke-width="1.3"/>
<line x1="615.5" y1="566" x2="615.5" y2="572" stroke="#333" stroke-width="1.3"/>
<line x1="635.5" y1="566" x2="635.5" y2="570" stroke="#333" stroke-width="1.3"/>
<line x1="654.5" y1="566" x2="654.5" y2="572" stroke="#333" stroke-width="1.3"/>
<line x1="674.5" y1="566" x2="674.5" y2="570" stroke="#333" stroke-width="1.3"/>
<line x1="693.5" y1="566" x2="693.5" y2="572" stroke="#333" stroke-width="1.3"/>
<line x1="712.5" y1="566" x2="712.5" y2="570" stroke="#333" stroke-width="1.3"/>
<line x1="732.5" y1="566" x2="732.5" y2="572" stroke="#333" stroke-width="1.3"/>
<line x1="751.5" y1="566" x2="751.5" y2="570" stroke="#333" stroke-width="1.3"/>
<line x1="771.5" y1="566" x2="771.5" y2="572" stroke="#333" stroke-width="1.3"/>
<line x1="790.5" y1="566" x2="790.5" y2="570" stroke="#333" stroke-width="1.3"/>
<line x1="809.5" y1="566" x2="809.5" y2="572" stroke="#333" stroke-width="1.3"/>
<line x1="829.5" y1="566" x2="829.5" y2="570" stroke="#333" stroke-width="1.3"/>
<line x1="848.5" y1="566" x2="848.5" y2="572" stroke="#333" stroke-width="1.3"/>
<line x1="868.5" y1="566" x2="868.5" y2="570" stroke="#333" stroke-width="1.3"/>
<line x1="887.5" y1="566" x2="887.5" y2="572" stroke="#333" stroke-width="1.3"/>
<line x1="906.5" y1="566" x2="906.5" y2="570" stroke="#333" stroke-width="1.3"/>
<line x1="926.5" y1="566" x2="926.5" y2="572" stroke="#333" stroke-width="1.3"/>
<line x1="945.5" y1="566" x2="945.5" y2="570" stroke="#333" stroke-width="1.3"/>
<line x1="965.5" y1="566" x2="965.5" y2="572" stroke="#333" stroke-width="1.3"/>
<g font-family='"Liberation Sans", sans-serif' font-size="11" fill="#222"><text x="491" y="571.5" text-anchor="end">0</text><text x="970" y="571.5" text-anchor="start">0</text><text x="491" y="527.2" text-anchor="end">0.01</text><text x="970" y="527.2" text-anchor="start">0.01</text><text x="491" y="483.0" text-anchor="end">0.02</text><text x="970" y="483.0" text-anchor="start">0.02</text><text x="491" y="438.8" text-anchor="end">0.03</text><text x="970" y="438.8" text-anchor="start">0.03</text><text x="491" y="394.5" text-anchor="end">0.04</text><text x="970" y="394.5" text-anchor="start">0.04</text><text x="491" y="350.2" text-anchor="end">0.05</text><text x="970" y="350.2" text-anchor="start">0.05</text><text x="491" y="306.0" text-anchor="end">0.06</text><text x="970" y="306.0" text-anchor="start">0.06</text><text x="491" y="261.7" text-anchor="end">0.07</text><text x="970" y="261.7" text-anchor="start">0.07</text><text x="491" y="217.5" text-anchor="end">0.08</text><text x="970" y="217.5" text-anchor="start">0.08</text><text x="499.0" y="586" text-anchor="middle">0</text><text x="537.8" y="586" text-anchor="middle">10</text><text x="576.6" y="586" text-anchor="middle">20</text><text x="615.4" y="586" text-anchor="middle">30</text><text x="654.2" y="586" text-anchor="middle">40</text><text x="693.0" y="586" text-anchor="middle">50</text><text x="731.8" y="586" text-anchor="middle">60</text><text x="770.6" y="586" text-anchor="middle">70</text><text x="809.4" y="586" text-anchor="middle">80</text><text x="848.2" y="586" text-anchor="middle">90</text><text x="887.0" y="586" text-anchor="middle">100</text><text x="925.8" y="586" text-anchor="middle">110</text><text x="964.6" y="586" text-anchor="middle">120</text></g>
<text x="732" y="602" text-anchor="middle" font-family='"Liberation Sans", sans-serif' font-size="12" fill="#222">Time (min)</text>
<text transform="translate(455,381) rotate(-90)" text-anchor="middle" font-family='"Liberation Sans", sans-serif' font-size="12" fill="#3b2f45">% of Total</text>
<text transform="translate(1010,381) rotate(90)" text-anchor="middle" font-family='"Liberation Sans", sans-serif' font-size="12" fill="#402a3f">% of Total</text>
</svg>

<div class="t" style="left:681px;top:638px;font-size:13px;letter-spacing:0.45px;font-weight:bold;font-style:italic;color:#fff">Synthetic - 2 hrs</div>
</body></html>
